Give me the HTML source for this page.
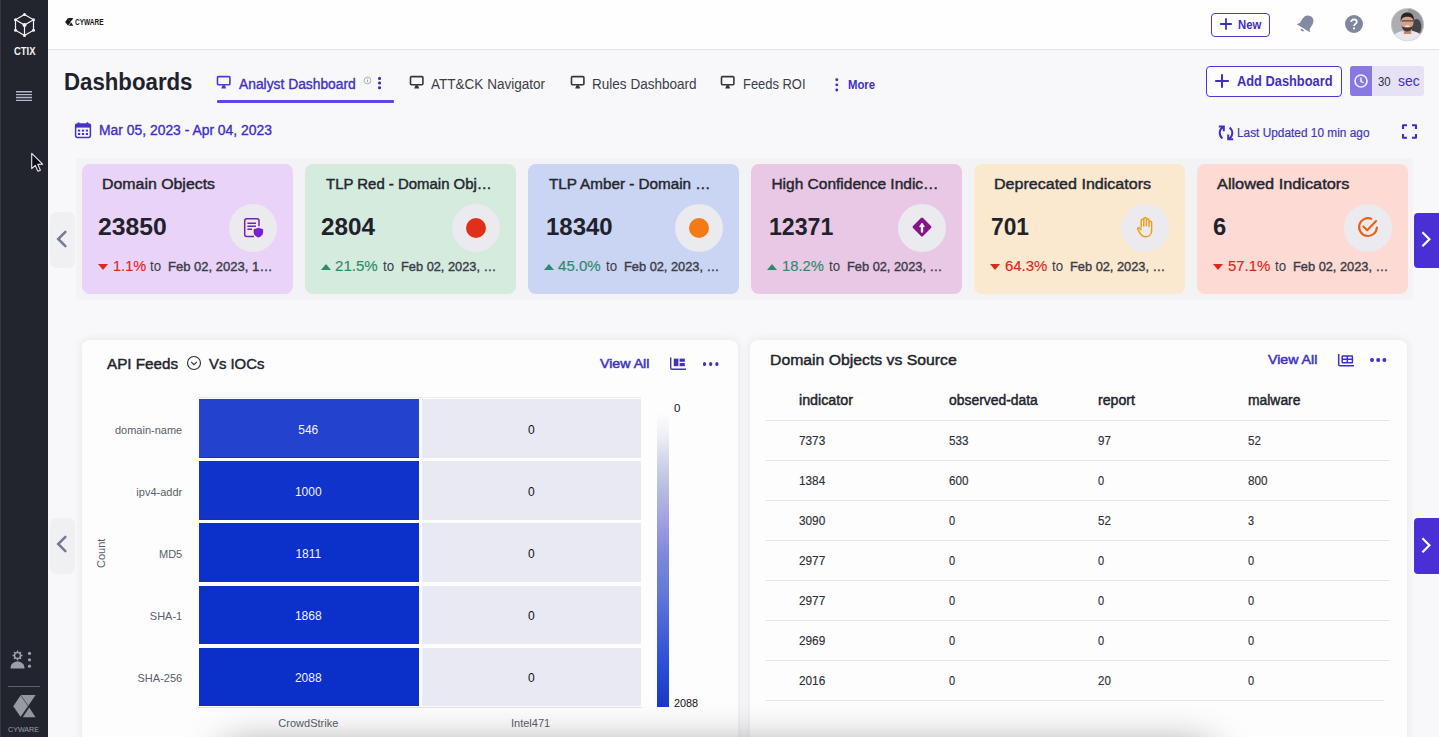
<!DOCTYPE html>
<html>
<head>
<meta charset="utf-8">
<title>Dashboards</title>
<style>
*{box-sizing:border-box;margin:0;padding:0}
html,body{width:1439px;height:737px;overflow:hidden;position:relative;background:#f8f8fa;font-family:"Liberation Sans",sans-serif;color:#1f222b}
#root{position:absolute;left:0;top:0;width:1439px;height:737px;overflow:hidden;background:#f8f8fa}
.abs{position:absolute}
.t{position:absolute;white-space:nowrap;line-height:1;transform-origin:0 0}
#sidebar{left:0;top:0;width:48px;height:737px;background:#22252d}
#topbar{left:48px;top:0;width:1391px;height:50px;background:#fefefe;border-bottom:1px solid #e3e3ea}
.card{position:absolute;top:164px;width:211px;height:129.5px;border-radius:8px}
.circ{position:absolute;top:203.5px;width:48px;height:48px;border-radius:50%;background:#eaeaef}
.tri{position:absolute;width:0;height:0;border-left:5px solid transparent;border-right:5px solid transparent}
.tri.dn{border-top:6px solid #dc2a1f}
.tri.up{border-bottom:6px solid #2e8b6a}
.panel{position:absolute;top:339.5px;width:655.5px;height:420px;background:#fdfdfd;border-radius:8px;box-shadow:0 0 9px 1px rgba(40,45,80,.075)}
.hl{position:absolute;height:1px;background:#e4e5ea}
</style>
</head>
<body>
<div id="root">
<div id="sidebar" class="abs">
<div class="abs" style="left:0;top:0;width:1px;height:737px;background:#34373f"></div><svg class="abs" style="left:11px;top:11px" width="27" height="28" viewBox="0 0 27 28" fill="none" stroke="#f4f4f6" stroke-width="1.200">
<path d="M13.500 3.500 L22.500 8.800 L22.500 19.200 L13.500 24.500 L4.500 19.200 L4.500 8.800 Z M4.500 8.800 L13.500 14 L22.500 8.800 M13.500 14 L13.500 24.500"/>
<g fill="#f4f4f6" stroke="none"><circle cx="13.500" cy="3.500" r="1.500"/><circle cx="22.500" cy="8.800" r="1.500"/><circle cx="22.500" cy="19.200" r="1.500"/><circle cx="13.500" cy="24.500" r="1.500"/><circle cx="4.500" cy="19.200" r="1.500"/><circle cx="4.500" cy="8.800" r="1.500"/><circle cx="13.500" cy="14" r="2"/></g>
</svg>
<svg class="abs" style="left:16px;top:90px" width="16" height="12" viewBox="0 0 16 12"><path d="M0 1.700H16M0 4.600H16M0 7.500H16M0 10.400H16" stroke="#b4b7c7" stroke-width="1.350"/></svg>
<svg class="abs" style="left:29px;top:151px" width="18" height="24" viewBox="0 0 18 24"><path d="M2.7 2.4 L2.7 17.6 L6.3 14.4 L8.9 20.3 L11.4 19.2 L8.8 13.4 L13.6 13.2 Z" fill="#0b0c10" stroke="#e8e8ee" stroke-width="1.1" stroke-linejoin="round"/></svg>
<svg class="abs" style="left:9px;top:649px" width="28" height="22" viewBox="0 0 28 22" fill="#9c9ea9">
<circle cx="8.5" cy="6.5" r="3" fill="none" stroke="#9c9ea9" stroke-width="1.600"/>
<path d="M8.5 1.5v1.6M8.5 9.9v1.6M3.5 6.5h1.6M11.9 6.5h1.6M5 3l1.1 1.1M10.9 8.9L12 10M12 3l-1.1 1.1M6.1 8.9L5 10" stroke="#9c9ea9" stroke-width="1.300"/>
<path d="M1.5 19.5 C1.5 14.5 5 12.5 8.5 12.5 C12 12.5 15.5 14.5 15.5 19.5 Z"/>
<circle cx="20.500" cy="4.400" r="1.600"/><circle cx="20.500" cy="10.800" r="1.600"/><circle cx="20.500" cy="17.200" r="1.600"/>
</svg>
<div class="abs" style="left:8px;top:686px;width:32px;height:1px;background:#5d606d"></div>
<svg class="abs" style="left:12px;top:694px" width="24" height="24" viewBox="0 0 24 24"><path d="M8.400 1 L23.600 1 L16 12.200 Z" fill="#94969f"/><path d="M10.800 23.300 L23.600 23.300 L17.200 13.400 Z" fill="#94969f"/><path d="M1 12.200 L8.600 1 L16.200 12.200 L8.600 23.300 Z" fill="#989aa3" stroke="#22252d" stroke-width=".5"/></svg>
</div>
<div class="t" style="left:13.50px;top:47.00px;font-size:10px;color:#f4f4f6;font-weight:bold;transform:scaleX(0.9430);">CTIX</div>
<div class="t" style="left:8.20px;top:726.00px;font-size:7.5px;color:#9c9ea8;transform:scaleX(0.9502);">CYWARE</div>
<div id="topbar" class="abs">
<svg class="abs" style="left:16.600px;top:17.700px" width="9" height="8" viewBox="0 0 9 8"><path d="M3 0 L8.400 0 L5.700 3.800 Z" fill="#16181d"/><path d="M3.800 7.800 L8.400 7.800 L6.200 4.400 Z" fill="#16181d"/><path d="M0.200 3.900 L3 0 L5.800 3.900 L3 7.800 Z" fill="#16181d"/></svg>
<div class="abs" style="left:1163px;top:13px;width:59px;height:23.5px;border:1.2px solid #4a39cf;border-radius:4px;background:#fff"></div>
<svg class="abs" style="left:1171px;top:17px" width="14" height="14" viewBox="0 0 14 14"><path d="M7 1.2V12.8M1.2 7H12.8" stroke="#3f2fc4" stroke-width="1.8"/></svg>
<svg class="abs" style="left:1246px;top:12px" width="24" height="24" viewBox="0 0 24 24" fill="#8289a3"><g transform="rotate(32 12 12)"><path d="M12 3 C8.2 3 6.3 5.8 6.3 9.2 V14.2 L4.3 17 H19.7 L17.7 14.2 V9.2 C17.7 5.8 15.8 3 12 3 Z"/><path d="M10.2 18.4 H13.8 A1.8 1.8 0 0 1 10.2 18.4Z"/></g></svg>
<svg class="abs" style="left:1296px;top:14px" width="20" height="20" viewBox="0 0 20 20"><circle cx="10" cy="10" r="9" fill="#7f869e"/><path d="M7.2 8.1 C7.2 6.4 8.4 5.4 10 5.4 C11.6 5.4 12.8 6.4 12.8 7.9 C12.8 9.7 10 10 10 12" fill="none" stroke="#fff" stroke-width="1.7"/><circle cx="10" cy="14.4" r="1.1" fill="#fff"/></svg>
<svg class="abs" style="left:1343px;top:8px" width="34" height="34" viewBox="0 0 34 34"><defs><clipPath id="av"><circle cx="16.400" cy="16.600" r="16.300"/></clipPath></defs><g clip-path="url(#av)"><rect width="34" height="34" fill="#adaeb4"/><path d="M17 0 H34 V34 H22 Z" fill="#94979c"/><ellipse cx="25.500" cy="19" rx="4.800" ry="8" fill="#2f2f33" opacity=".8"/><ellipse cx="16.500" cy="36.500" rx="19" ry="14" fill="#e9e7ec"/><rect x="12.800" y="19" width="7.400" height="7" fill="#bf8670"/><ellipse cx="16.300" cy="14.600" rx="6.200" ry="7.600" fill="#d7a189"/><path d="M9.800 14 C9 6.500 12.500 4.600 16.300 4.600 C20.100 4.600 23.600 6.500 22.800 14 C22.200 10.200 20.600 8.800 16.300 8.800 C12 8.800 10.400 10.200 9.800 14Z" fill="#2a2422"/><path d="M10.300 16.500 C11 21.500 13.500 23.400 16.300 23.400 C19.100 23.400 21.600 21.500 22.300 16.500 C21.500 19.300 19.500 19.600 16.300 19.600 C13.100 19.600 11.100 19.300 10.300 16.500Z" fill="#4a352e"/><rect x="10.600" y="12.200" width="11.400" height="1.300" fill="#3a2e2a" opacity=".75"/><rect x="14.300" y="17.600" width="4" height="1.400" rx=".6" fill="#f3eeee"/></g><circle cx="16.400" cy="16.600" r="16.300" fill="none" stroke="#d5d6dc" stroke-width=".6"/></svg>
</div>
<div class="t" style="left:74.90px;top:18.00px;font-size:8.5px;color:#16181d;font-weight:bold;transform:scaleX(0.7638);">CYWARE</div>
<div class="t" style="left:1237.70px;top:19.00px;font-size:12px;color:#3f2fc4;font-weight:bold;transform:scaleX(0.9426);">New</div>
<div class="t" style="left:64.40px;top:71.00px;font-size:23.5px;color:#1f222b;font-weight:bold;transform:scaleX(0.9460);">Dashboards</div>
<svg class="abs" style="left:215.9px;top:75.3px" width="16" height="15" viewBox="0 0 16 15"><rect x="1.5" y="1.6" width="12.4" height="8.2" rx="1" fill="none" stroke="#4a39d6" stroke-width="1.6"/><path d="M6.5 10.3 L8.9 10.3 L10.2 13.4 L5.2 13.4 Z" fill="#4a39d6"/></svg>
<div class="t" style="left:238.57px;top:77.00px;font-size:14px;color:#4030c4;-webkit-text-stroke:0.35px #4030c4;transform:scaleX(0.9869);">Analyst Dashboard</div>
<svg class="abs" style="left:363px;top:76px" width="9" height="9" viewBox="0 0 9 9"><circle cx="4.5" cy="4.5" r="3.4" fill="none" stroke="#8d8fa0" stroke-width=".7"/><path d="M4.5 4v2.2M4.5 2.6v.8" stroke="#8d8fa0" stroke-width=".8"/></svg>
<div class="abs" style="left:378px;top:77.4px;width:2.6px;height:2.6px;border-radius:50%;background:#3f2fc4;box-shadow:0 4.6px 0 #3f2fc4,0 9.2px 0 #3f2fc4"></div>
<div class="abs" style="left:216.7px;top:100.2px;width:177px;height:3px;background:#5a47e8;border-radius:1px"></div>
<svg class="abs" style="left:408.9px;top:75.3px" width="16" height="15" viewBox="0 0 16 15"><rect x="1.5" y="1.6" width="12.4" height="8.2" rx="1" fill="none" stroke="#33363f" stroke-width="1.6"/><path d="M6.5 10.3 L8.9 10.3 L10.2 13.4 L5.2 13.4 Z" fill="#33363f"/></svg>
<div class="t" style="left:431.40px;top:77.00px;font-size:14px;color:#3a3d47;transform:scaleX(0.9668);">ATT&amp;CK Navigator</div>
<svg class="abs" style="left:569.5px;top:75.3px" width="16" height="15" viewBox="0 0 16 15"><rect x="1.5" y="1.6" width="12.4" height="8.2" rx="1" fill="none" stroke="#33363f" stroke-width="1.6"/><path d="M6.5 10.3 L8.9 10.3 L10.2 13.4 L5.2 13.4 Z" fill="#33363f"/></svg>
<div class="t" style="left:592.20px;top:77.00px;font-size:14px;color:#3a3d47;transform:scaleX(0.9672);">Rules Dashboard</div>
<svg class="abs" style="left:720.3px;top:75.3px" width="16" height="15" viewBox="0 0 16 15"><rect x="1.5" y="1.6" width="12.4" height="8.2" rx="1" fill="none" stroke="#33363f" stroke-width="1.6"/><path d="M6.5 10.3 L8.9 10.3 L10.2 13.4 L5.2 13.4 Z" fill="#33363f"/></svg>
<div class="t" style="left:743.00px;top:77.00px;font-size:14px;color:#3a3d47;transform:scaleX(0.9233);">Feeds ROI</div>
<svg class="abs" style="left:833px;top:77px" width="8" height="16" viewBox="0 0 8 16" fill="#3f2fc4"><circle cx="3.800" cy="2.750" r="1.450"/><circle cx="3.800" cy="7.850" r="1.450"/><circle cx="3.800" cy="12.950" r="1.450"/></svg>
<div class="t" style="left:847.90px;top:79.00px;font-size:12px;color:#3f2fc4;font-weight:bold;transform:scaleX(0.9449);">More</div>
<div class="abs" style="left:1206px;top:66px;width:136px;height:31px;border:1.3px solid #4a39cf;border-radius:4px;background:#fdfdff"></div>
<svg class="abs" style="left:1214px;top:73px" width="16" height="16" viewBox="0 0 16 16"><path d="M8 1.2V14.8M1.2 8H14.8" stroke="#3f2fc4" stroke-width="2"/></svg>
<div class="t" style="left:1237.00px;top:74.00px;font-size:14px;color:#3f2fc4;font-weight:bold;transform:scaleX(0.9162);">Add Dashboard</div>
<div class="abs" style="left:1350px;top:66px;width:74px;height:30px;border-radius:3px;background:#e6e1f5;overflow:hidden"><div class="abs" style="left:0;top:0;width:22px;height:30px;background:#8878e4"></div></div>
<svg class="abs" style="left:1353px;top:73px" width="16" height="16" viewBox="0 0 16 16"><circle cx="8" cy="8" r="6" fill="none" stroke="#f3f1fb" stroke-width="1.6"/><path d="M8 4.4V8.3L10.4 9.8" fill="none" stroke="#f3f1fb" stroke-width="1.5"/></svg>
<div class="t" style="left:1378.10px;top:75.00px;font-size:13px;color:#2b2e38;transform:scaleX(0.8732);">30</div>
<div class="t" style="left:1398.30px;top:74.00px;font-size:14.5px;color:#4030c4;transform:scaleX(0.9624);">sec</div>
<svg class="abs" style="left:74px;top:121px" width="18" height="18" viewBox="0 0 18 18"><path d="M4.6 1.2V4M13.4 1.2V4" stroke="#4334c6" stroke-width="1.6"/><rect x="1.6" y="3" width="14.8" height="13.4" rx="1.8" fill="none" stroke="#4334c6" stroke-width="1.5"/><rect x="1.6" y="3" width="14.8" height="3.6" fill="#4334c6"/><g fill="#4334c6"><rect x="4" y="8.6" width="2.2" height="2"/><rect x="7.9" y="8.6" width="2.2" height="2"/><rect x="11.8" y="8.6" width="2.2" height="2"/><rect x="4" y="12" width="2.2" height="2"/><rect x="7.9" y="12" width="2.2" height="2"/><rect x="11.8" y="12" width="2.2" height="2"/></g></svg>
<div class="t" style="left:98.87px;top:123.00px;font-size:14px;color:#3f2fc4;-webkit-text-stroke:0.35px #3f2fc4;transform:scaleX(0.9919);">Mar 05, 2023 - Apr 04, 2023</div>
<svg class="abs" style="left:1217px;top:124px" width="18" height="18" viewBox="0 0 18 18" fill="none" stroke="#3f2fc4" stroke-width="2"><path d="M6.200 2.800 C1.600 5.600 1.800 11.400 5.400 14.400"/><path d="M1.800 2.600 H6.800 V7.200"/><path d="M11.800 15 C16.400 12.200 16.200 6.400 12.600 3.400"/><path d="M16.200 15.200 H11.200 V10.600"/></svg>
<div class="t" style="left:1237.10px;top:127.00px;font-size:12px;color:#4338b8;-webkit-text-stroke:0.2px #4338b8;transform:scaleX(0.9881);">Last Updated 10 min ago</div>
<svg class="abs" style="left:1401px;top:123px" width="17" height="17" viewBox="0 0 17 17" fill="none" stroke="#3f2fc4" stroke-width="2.100" stroke-linejoin="round"><path d="M2 6V2.200H6M11 2.200H15V6M15 11V14.800H11M6 14.800H2V11"/></svg>
<div class="abs" style="left:76px;top:158px;width:1337px;height:142px;background:#f3f3f6;border-radius:4px"></div>
<div class="abs" style="left:50px;top:212px;width:25px;height:56px;background:#f0f0f3;border-radius:7px"></div>
<svg class="abs" style="left:54px;top:230px" width="14" height="18" viewBox="0 0 14 18"><path d="M11.400 1.800 L4.200 9 L11.400 16.200" fill="none" stroke="#727b93" stroke-width="2.500" stroke-linecap="round"/></svg>
<div class="abs" style="left:1413.5px;top:212.5px;width:26px;height:55.5px;background:#4a2fd4;border-radius:4px 0 0 4px"></div>
<svg class="abs" style="left:1419px;top:230px" width="14" height="18" viewBox="0 0 14 18"><path d="M3.4 2.2 L10.4 9.2 L3.4 16.2" fill="none" stroke="#fff" stroke-width="2.2"/></svg>
<div class="card" style="left:82px;background:#e9d3f8"></div>
<div class="circ" style="left:229px"></div>
<div class="t" style="left:102.23px;top:176.00px;font-size:15.5px;color:#24272f;-webkit-text-stroke:0.45px #24272f;transform:scaleX(1.0250);">Domain Objects</div>
<div class="t" style="left:98.00px;top:216.00px;font-size:23px;color:#1f222b;font-weight:bold;transform:scaleX(1.0744);">23850</div>
<div class="tri dn" style="left:98.2px;top:264px"></div>
<div class="t" style="left:112.77px;top:258.00px;font-size:15.5px;color:#d9281c;-webkit-text-stroke:0.15px #d9281c;transform:scaleX(0.9383);">1.1%</div>
<div class="t" style="left:150.10px;top:259.00px;font-size:14px;color:#3a3d47;transform:scaleX(0.9495);">to</div>
<div class="t" style="left:168.29px;top:260.00px;font-size:13.5px;color:#3a3d47;-webkit-text-stroke:0.4px #3a3d47;transform:scaleX(0.9662);">Feb 02, 2023, 1…</div>
<div class="card" style="left:305px;background:#d4ebde"></div>
<div class="circ" style="left:452px"></div>
<div class="t" style="left:326.32px;top:176.00px;font-size:15.5px;color:#24272f;-webkit-text-stroke:0.45px #24272f;transform:scaleX(0.9639);">TLP Red - Domain Obj…</div>
<div class="t" style="left:321.40px;top:216.00px;font-size:23px;color:#1f222b;font-weight:bold;transform:scaleX(1.0552);">2804</div>
<div class="tri up" style="left:321.2px;top:264px"></div>
<div class="t" style="left:335.27px;top:258.00px;font-size:15.5px;color:#2e8b6a;-webkit-text-stroke:0.15px #2e8b6a;transform:scaleX(0.9730);">21.5%</div>
<div class="t" style="left:382.50px;top:259.00px;font-size:14px;color:#3a3d47;transform:scaleX(0.9495);">to</div>
<div class="t" style="left:400.79px;top:260.00px;font-size:13.5px;color:#3a3d47;-webkit-text-stroke:0.4px #3a3d47;transform:scaleX(0.9487);">Feb 02, 2023, …</div>
<div class="card" style="left:528px;background:#cad4f3"></div>
<div class="circ" style="left:675px"></div>
<div class="t" style="left:549.32px;top:176.00px;font-size:15.5px;color:#24272f;-webkit-text-stroke:0.45px #24272f;transform:scaleX(0.9832);">TLP Amber - Domain …</div>
<div class="t" style="left:545.90px;top:216.00px;font-size:23px;color:#1f222b;font-weight:bold;transform:scaleX(1.0416);">18340</div>
<div class="tri up" style="left:544.2px;top:264px"></div>
<div class="t" style="left:558.27px;top:258.00px;font-size:15.5px;color:#2e8b6a;-webkit-text-stroke:0.15px #2e8b6a;transform:scaleX(0.9730);">45.0%</div>
<div class="t" style="left:605.50px;top:259.00px;font-size:14px;color:#3a3d47;transform:scaleX(0.9495);">to</div>
<div class="t" style="left:623.79px;top:260.00px;font-size:13.5px;color:#3a3d47;-webkit-text-stroke:0.4px #3a3d47;transform:scaleX(0.9487);">Feb 02, 2023, …</div>
<div class="card" style="left:751px;background:#e9c8e5"></div>
<div class="circ" style="left:898px"></div>
<div class="t" style="left:771.43px;top:176.00px;font-size:15.5px;color:#24272f;-webkit-text-stroke:0.45px #24272f;">High Confidence Indic…</div>
<div class="t" style="left:768.90px;top:216.00px;font-size:23px;color:#1f222b;font-weight:bold;transform:scaleX(1.0056);">12371</div>
<div class="tri up" style="left:767.2px;top:264px"></div>
<div class="t" style="left:782.27px;top:258.00px;font-size:15.5px;color:#2e8b6a;-webkit-text-stroke:0.15px #2e8b6a;transform:scaleX(0.9503);">18.2%</div>
<div class="t" style="left:828.50px;top:259.00px;font-size:14px;color:#3a3d47;transform:scaleX(0.9495);">to</div>
<div class="t" style="left:846.79px;top:260.00px;font-size:13.5px;color:#3a3d47;-webkit-text-stroke:0.4px #3a3d47;transform:scaleX(0.9487);">Feb 02, 2023, …</div>
<div class="card" style="left:974px;background:#fae9cf"></div>
<div class="circ" style="left:1121px"></div>
<div class="t" style="left:994.43px;top:176.00px;font-size:15.5px;color:#24272f;-webkit-text-stroke:0.45px #24272f;transform:scaleX(1.0354);">Deprecated Indicators</div>
<div class="t" style="left:990.70px;top:216.00px;font-size:23px;color:#1f222b;font-weight:bold;transform:scaleX(0.9893);">701</div>
<div class="tri dn" style="left:990.2px;top:264px"></div>
<div class="t" style="left:1004.67px;top:258.00px;font-size:15.5px;color:#d9281c;-webkit-text-stroke:0.15px #d9281c;transform:scaleX(0.9639);">64.3%</div>
<div class="t" style="left:1051.50px;top:259.00px;font-size:14px;color:#3a3d47;transform:scaleX(0.9495);">to</div>
<div class="t" style="left:1069.79px;top:260.00px;font-size:13.5px;color:#3a3d47;-webkit-text-stroke:0.4px #3a3d47;transform:scaleX(0.9487);">Feb 02, 2023, …</div>
<div class="card" style="left:1197px;background:#fedad5"></div>
<div class="circ" style="left:1344px"></div>
<div class="t" style="left:1217.44px;top:176.00px;font-size:15.5px;color:#24272f;-webkit-text-stroke:0.45px #24272f;transform:scaleX(1.0520);">Allowed Indicators</div>
<div class="t" style="left:1213.40px;top:216.00px;font-size:23px;color:#1f222b;font-weight:bold;transform:scaleX(1.0341);">6</div>
<div class="tri dn" style="left:1213.2px;top:264px"></div>
<div class="t" style="left:1227.67px;top:258.00px;font-size:15.5px;color:#d9281c;-webkit-text-stroke:0.15px #d9281c;transform:scaleX(0.9639);">57.1%</div>
<div class="t" style="left:1274.50px;top:259.00px;font-size:14px;color:#3a3d47;transform:scaleX(0.9495);">to</div>
<div class="t" style="left:1292.79px;top:260.00px;font-size:13.5px;color:#3a3d47;-webkit-text-stroke:0.4px #3a3d47;transform:scaleX(0.9487);">Feb 02, 2023, …</div>
<svg class="abs" style="left:241px;top:216px" width="24" height="24" viewBox="0 0 24 24" fill="none"><path d="M13 20.500 H5.700 C4.500 20.500 3.700 19.700 3.700 18.500 V4.700 C3.700 3.500 4.500 2.700 5.700 2.700 H16 C17.200 2.700 18 3.500 18 4.700 V10.300" stroke="#7a1fb8" stroke-width="1.500"/><path d="M6.400 7.200H15M6.400 10.200H15M6.400 13.300H11" stroke="#7a1fb8" stroke-width="1.400"/><path d="M17.400 11.800 L22.100 13.300 V16.600 C22.100 19 20 20.700 17.400 21.600 C14.800 20.700 12.700 19 12.700 16.600 V13.300 Z" fill="#7a1fd0"/></svg>
<div class="abs" style="left:466px;top:217.7px;width:20px;height:20px;border-radius:50%;background:#e0301a"></div>
<div class="abs" style="left:689px;top:217.7px;width:20px;height:20px;border-radius:50%;background:#f47a16"></div>
<svg class="abs" style="left:910.1px;top:215.3px" width="24" height="24" viewBox="0 0 24 24"><rect x="4.900" y="4.900" width="14.200" height="14.200" rx="1.500" transform="rotate(45 12 12)" fill="#87138a"/><path d="M12 16.700V10" stroke="#fff" stroke-width="2.300" stroke-linecap="round"/><path d="M9.500 11.700 L12 8 L14.500 11.700 Z" fill="#fff" stroke="#fff" stroke-width=".6" stroke-linejoin="round"/></svg>
<svg class="abs" style="left:1133px;top:214.6px" width="24" height="24" viewBox="0 0 24 24" fill="none" stroke="#e9a01e" stroke-width="1.5" stroke-linecap="round" stroke-linejoin="round"><path d="M8.2 12V5.6a1.3 1.3 0 0 1 2.6 0V11M10.8 10.6V3.9a1.3 1.3 0 0 1 2.6 0V10.6M13.4 10.8V5a1.3 1.3 0 0 1 2.6 0V11.4M16 11.6V7.6a1.3 1.3 0 0 1 2.6 0V15.4c0 3.6-2.4 6.3-6 6.3-2.8 0-4.400-1.400-5.600-3.600L4.800 14.100c-.5-1 .7-2 1.700-1.100L8.200 14.600"/></svg>
<svg class="abs" style="left:1355.9px;top:215.3px" width="24" height="24" viewBox="0 0 24 24" fill="none" stroke="#e9600f" stroke-width="2.100" stroke-linecap="round" stroke-linejoin="round"><path d="M20.900 12.600 A8.900 8.900 0 1 1 15.200 3.700"/><path d="M7.400 11.600 L11.200 15.300 L20.100 6"/></svg>
<div class="panel" style="left:82px"></div>
<div class="panel" style="left:750px;width:656.5px"></div>
<div class="abs" style="left:50px;top:518px;width:25px;height:56px;background:#f0f0f3;border-radius:7px"></div>
<svg class="abs" style="left:54px;top:535px" width="14" height="18" viewBox="0 0 14 18"><path d="M11.400 1.800 L4.200 9 L11.400 16.200" fill="none" stroke="#727b93" stroke-width="2.500" stroke-linecap="round"/></svg>
<div class="abs" style="left:1413.5px;top:518px;width:26px;height:55.5px;background:#4a2fd4;border-radius:4px 0 0 4px"></div>
<svg class="abs" style="left:1419px;top:535.5px" width="14" height="18" viewBox="0 0 14 18"><path d="M3.4 2.2 L10.4 9.2 L3.4 16.2" fill="none" stroke="#fff" stroke-width="2.2"/></svg>
<div class="t" style="left:106.62px;top:356.00px;font-size:15.5px;color:#22252d;-webkit-text-stroke:0.45px #22252d;transform:scaleX(0.9830);">API Feeds</div>
<svg class="abs" style="left:185.7px;top:355.3px" width="16" height="16" viewBox="0 0 16 16" fill="none" stroke="#2b2e38" stroke-width="1.1"><circle cx="8" cy="8" r="6.5"/><path d="M5.2 6.9 L8 9.7 L10.800 6.900"/></svg>
<div class="t" style="left:209.12px;top:356.00px;font-size:15.5px;color:#22252d;-webkit-text-stroke:0.45px #22252d;transform:scaleX(0.9590);">Vs IOCs</div>
<div class="t" style="left:599.76px;top:357.00px;font-size:13.7px;color:#4030c4;-webkit-text-stroke:0.5px #4030c4;transform:scaleX(1.0364);">View All</div>
<svg class="abs" style="left:669px;top:356px" width="18" height="15" viewBox="0 0 18 15" fill="#4030c4"><path d="M1.700 1.400 V12 C1.700 12.700 2.200 13.200 2.900 13.200 H17" fill="none" stroke="#4030c4" stroke-width="1.400"/><rect x="4.800" y="2.600" width="4.600" height="7.600"/><rect x="10.600" y="2.600" width="5.200" height="3.200"/><rect x="10.600" y="7" width="5.200" height="3.200"/></svg>
<div class="abs" style="left:702.6px;top:361.8px;width:3.8px;height:3.8px;border-radius:50%;background:#4030c4;box-shadow:6.2px 0 0 #4030c4,12.400px 0 0 #4030c4"></div>
<div class="abs" style="left:198px;top:397.4px;width:443.5px;height:1px;background:#ebecf0"></div>
<div class="abs" style="left:198px;top:707.4px;width:443.5px;height:1px;background:#e3e4ea"></div>
<div class="abs" style="left:198.8px;top:399.2px;width:219.8px;height:58.4px;background:#2342ce;border-bottom:1px solid #30345a"></div>
<div class="abs" style="left:422px;top:399.2px;width:219px;height:58.4px;background:#e8e9f3"></div>
<div class="t" style="left:114.93px;top:425.00px;font-size:11px;color:#5a5e6a;">domain-name</div>
<div class="t" style="left:298.28px;top:424.00px;font-size:12px;color:#f2f2fa;">546</div>
<div class="t" style="left:528.07px;top:424.00px;font-size:12px;color:#111;">0</div>
<div class="abs" style="left:198.8px;top:461.0px;width:219.8px;height:58.5px;background:#0f33cb;border-bottom:1px solid #30345a"></div>
<div class="abs" style="left:422px;top:461.0px;width:219px;height:58.5px;background:#e8e9f3"></div>
<div class="t" style="left:136.33px;top:487.00px;font-size:11px;color:#5a5e6a;">ipv4-addr</div>
<div class="t" style="left:294.95px;top:486.00px;font-size:12px;color:#f2f2fa;">1000</div>
<div class="t" style="left:528.07px;top:486.00px;font-size:12px;color:#111;">0</div>
<div class="abs" style="left:198.8px;top:522.9px;width:219.8px;height:59.1px;background:#0c30ca;border-bottom:1px solid #30345a"></div>
<div class="abs" style="left:422px;top:522.9px;width:219px;height:59.1px;background:#e8e9f3"></div>
<div class="t" style="left:158.99px;top:549.00px;font-size:11px;color:#5a5e6a;">MD5</div>
<div class="t" style="left:295.40px;top:548.00px;font-size:12px;color:#f2f2fa;">1811</div>
<div class="t" style="left:528.07px;top:548.00px;font-size:12px;color:#111;">0</div>
<div class="abs" style="left:198.8px;top:585.8px;width:219.8px;height:58.4px;background:#0c30ca;border-bottom:1px solid #30345a"></div>
<div class="abs" style="left:422px;top:585.8px;width:219px;height:58.4px;background:#e8e9f3"></div>
<div class="t" style="left:149.80px;top:611.00px;font-size:11px;color:#5a5e6a;">SHA-1</div>
<div class="t" style="left:294.95px;top:610.00px;font-size:12px;color:#f2f2fa;">1868</div>
<div class="t" style="left:528.07px;top:610.00px;font-size:12px;color:#111;">0</div>
<div class="abs" style="left:198.8px;top:647.9px;width:219.8px;height:58.5px;background:#0b2fc9;border-bottom:1px solid #30345a"></div>
<div class="abs" style="left:422px;top:647.9px;width:219px;height:58.5px;background:#e8e9f3"></div>
<div class="t" style="left:137.54px;top:673.00px;font-size:11px;color:#5a5e6a;">SHA-256</div>
<div class="t" style="left:294.95px;top:672.00px;font-size:12px;color:#f2f2fa;">2088</div>
<div class="t" style="left:528.07px;top:672.00px;font-size:12px;color:#111;">0</div>
<div class="t" style="left:95.8px;top:567.5px;font-size:11px;color:#5a5e6a;transform:rotate(-90deg);transform-origin:0 0">Count</div>
<div class="t" style="left:278.35px;top:718.00px;font-size:11px;color:#5a5e6a;">CrowdStrike</div>
<div class="t" style="left:511.02px;top:718.00px;font-size:11px;color:#5a5e6a;">Intel471</div>
<div class="abs" style="left:657px;top:413px;width:12.400px;height:294px;background:linear-gradient(to bottom,#fdfdfe 0%,#eeeef6 8%,#ccd0ea 18%,#b6bcde 26%,#a2a2e2 36%,#7f88dc 48%,#667ad8 60%,#4b65d8 72%,#2f50d8 84%,#2041cc 94%,#1a39c4 100%)"></div>
<div class="t" style="left:674.00px;top:403.00px;font-size:11.5px;color:#111;">0</div>
<div class="t" style="left:674.00px;top:698.00px;font-size:11.5px;color:#111;transform:scaleX(0.9419);">2088</div>
<div class="t" style="left:770.43px;top:352.00px;font-size:15.5px;color:#22252d;-webkit-text-stroke:0.45px #22252d;transform:scaleX(1.0176);">Domain Objects vs Source</div>
<div class="t" style="left:1267.76px;top:353.00px;font-size:13.7px;color:#4030c4;-webkit-text-stroke:0.5px #4030c4;transform:scaleX(1.0343);">View All</div>
<svg class="abs" style="left:1337px;top:353px" width="18" height="15" viewBox="0 0 18 15" fill="none" stroke="#4030c4" stroke-width="1.500"><path d="M1.700 1 V11.600 C1.700 12.300 2.200 12.800 2.900 12.800 H17"/><rect x="5.200" y="2.900" width="10.200" height="6.800" rx=".5"/><path d="M5.200 6.300 H15.400 M10.300 2.900 V9.700"/></svg>
<div class="abs" style="left:1370.2px;top:357.9px;width:3.8px;height:3.8px;border-radius:50%;background:#4030c4;box-shadow:6.2px 0 0 #4030c4,12.400px 0 0 #4030c4"></div>
<div class="t" style="left:798.53px;top:393.00px;font-size:14px;color:#22252d;-webkit-text-stroke:0.45px #22252d;transform:scaleX(1.0193);">indicator</div>
<div class="t" style="left:948.62px;top:393.00px;font-size:14px;color:#22252d;-webkit-text-stroke:0.45px #22252d;transform:scaleX(0.9924);">observed-data</div>
<div class="t" style="left:1098.43px;top:393.00px;font-size:14px;color:#22252d;-webkit-text-stroke:0.45px #22252d;transform:scaleX(1.0084);">report</div>
<div class="t" style="left:1248.42px;top:393.00px;font-size:14px;color:#22252d;-webkit-text-stroke:0.45px #22252d;transform:scaleX(0.9912);">malware</div>
<div class="hl" style="left:766px;top:420px;width:624px"></div>
<div class="hl" style="left:766px;top:460px;width:624px"></div>
<div class="hl" style="left:766px;top:500px;width:624px"></div>
<div class="hl" style="left:766px;top:540px;width:624px"></div>
<div class="hl" style="left:766px;top:580px;width:624px"></div>
<div class="hl" style="left:766px;top:620px;width:624px"></div>
<div class="hl" style="left:766px;top:660px;width:624px"></div>
<div class="hl" style="left:766px;top:700px;width:618px"></div>
<div class="t" style="left:798.57px;top:435.00px;font-size:12px;color:#2d3039;-webkit-text-stroke:0.15px #2d3039;transform:scaleX(0.9825);">7373</div>
<div class="t" style="left:948.67px;top:435.00px;font-size:12px;color:#2d3039;-webkit-text-stroke:0.15px #2d3039;transform:scaleX(0.9737);">533</div>
<div class="t" style="left:1098.47px;top:435.00px;font-size:12px;color:#2d3039;-webkit-text-stroke:0.15px #2d3039;transform:scaleX(0.9607);">97</div>
<div class="t" style="left:1248.47px;top:435.00px;font-size:12px;color:#2d3039;-webkit-text-stroke:0.15px #2d3039;transform:scaleX(0.9607);">52</div>
<div class="t" style="left:798.57px;top:475.00px;font-size:12px;color:#2d3039;-webkit-text-stroke:0.15px #2d3039;transform:scaleX(0.9825);">1384</div>
<div class="t" style="left:948.67px;top:475.00px;font-size:12px;color:#2d3039;-webkit-text-stroke:0.15px #2d3039;transform:scaleX(0.9737);">600</div>
<div class="t" style="left:1098.47px;top:475.00px;font-size:12px;color:#2d3039;-webkit-text-stroke:0.15px #2d3039;transform:scaleX(0.9134);">0</div>
<div class="t" style="left:1248.47px;top:475.00px;font-size:12px;color:#2d3039;-webkit-text-stroke:0.15px #2d3039;transform:scaleX(0.9737);">800</div>
<div class="t" style="left:798.57px;top:515.00px;font-size:12px;color:#2d3039;-webkit-text-stroke:0.15px #2d3039;transform:scaleX(0.9825);">3090</div>
<div class="t" style="left:948.67px;top:515.00px;font-size:12px;color:#2d3039;-webkit-text-stroke:0.15px #2d3039;transform:scaleX(0.9134);">0</div>
<div class="t" style="left:1098.47px;top:515.00px;font-size:12px;color:#2d3039;-webkit-text-stroke:0.15px #2d3039;transform:scaleX(0.9607);">52</div>
<div class="t" style="left:1248.47px;top:515.00px;font-size:12px;color:#2d3039;-webkit-text-stroke:0.15px #2d3039;transform:scaleX(0.9134);">3</div>
<div class="t" style="left:798.57px;top:555.00px;font-size:12px;color:#2d3039;-webkit-text-stroke:0.15px #2d3039;transform:scaleX(0.9825);">2977</div>
<div class="t" style="left:948.67px;top:555.00px;font-size:12px;color:#2d3039;-webkit-text-stroke:0.15px #2d3039;transform:scaleX(0.9134);">0</div>
<div class="t" style="left:1098.47px;top:555.00px;font-size:12px;color:#2d3039;-webkit-text-stroke:0.15px #2d3039;transform:scaleX(0.9134);">0</div>
<div class="t" style="left:1248.47px;top:555.00px;font-size:12px;color:#2d3039;-webkit-text-stroke:0.15px #2d3039;transform:scaleX(0.9134);">0</div>
<div class="t" style="left:798.57px;top:595.00px;font-size:12px;color:#2d3039;-webkit-text-stroke:0.15px #2d3039;transform:scaleX(0.9825);">2977</div>
<div class="t" style="left:948.67px;top:595.00px;font-size:12px;color:#2d3039;-webkit-text-stroke:0.15px #2d3039;transform:scaleX(0.9134);">0</div>
<div class="t" style="left:1098.47px;top:595.00px;font-size:12px;color:#2d3039;-webkit-text-stroke:0.15px #2d3039;transform:scaleX(0.9134);">0</div>
<div class="t" style="left:1248.47px;top:595.00px;font-size:12px;color:#2d3039;-webkit-text-stroke:0.15px #2d3039;transform:scaleX(0.9134);">0</div>
<div class="t" style="left:798.57px;top:635.00px;font-size:12px;color:#2d3039;-webkit-text-stroke:0.15px #2d3039;transform:scaleX(0.9825);">2969</div>
<div class="t" style="left:948.67px;top:635.00px;font-size:12px;color:#2d3039;-webkit-text-stroke:0.15px #2d3039;transform:scaleX(0.9134);">0</div>
<div class="t" style="left:1098.47px;top:635.00px;font-size:12px;color:#2d3039;-webkit-text-stroke:0.15px #2d3039;transform:scaleX(0.9134);">0</div>
<div class="t" style="left:1248.47px;top:635.00px;font-size:12px;color:#2d3039;-webkit-text-stroke:0.15px #2d3039;transform:scaleX(0.9134);">0</div>
<div class="t" style="left:798.57px;top:675.00px;font-size:12px;color:#2d3039;-webkit-text-stroke:0.15px #2d3039;transform:scaleX(0.9825);">2016</div>
<div class="t" style="left:948.67px;top:675.00px;font-size:12px;color:#2d3039;-webkit-text-stroke:0.15px #2d3039;transform:scaleX(0.9134);">0</div>
<div class="t" style="left:1098.47px;top:675.00px;font-size:12px;color:#2d3039;-webkit-text-stroke:0.15px #2d3039;transform:scaleX(0.9607);">20</div>
<div class="t" style="left:1248.47px;top:675.00px;font-size:12px;color:#2d3039;-webkit-text-stroke:0.15px #2d3039;transform:scaleX(0.9134);">0</div>
<div class="abs" style="left:225px;top:749px;width:985px;height:60px;border-radius:16px;box-shadow:0 0 38px 4px rgba(20,20,30,.42)"></div>
</div>
</body>
</html>
